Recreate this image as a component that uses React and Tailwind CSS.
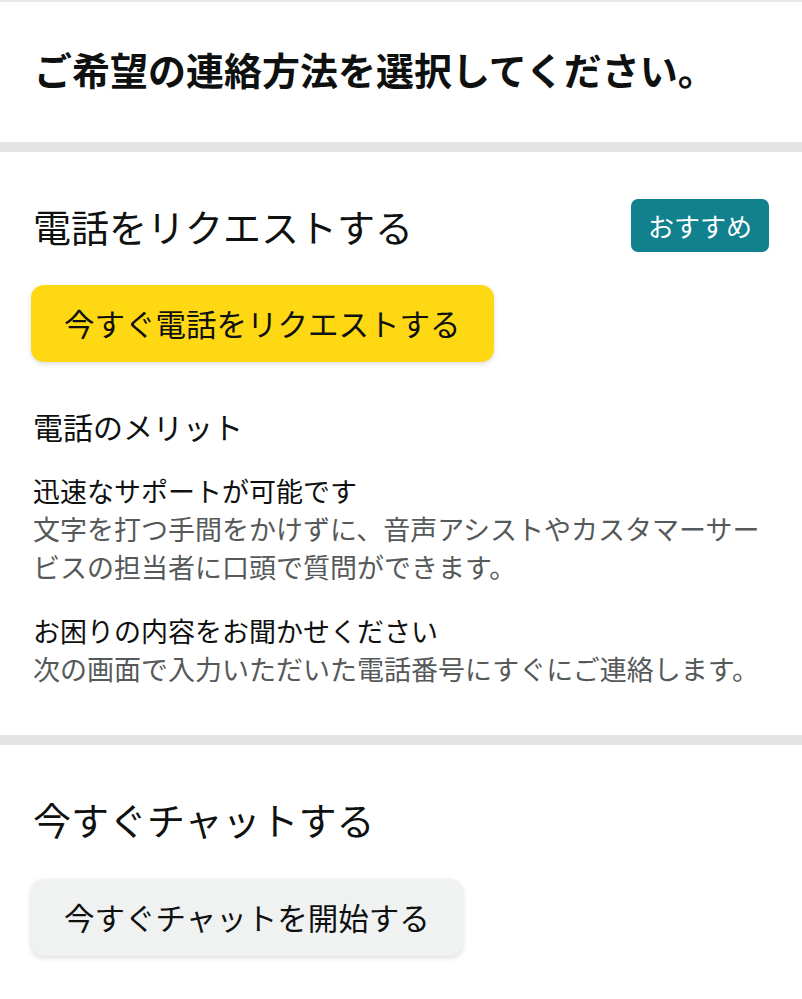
import React from 'react';

const FONT = { fontFamily: '"Noto Sans CJK JP", "Noto Sans", sans-serif' };

const MERITS = [
  {
    title: '迅速なサポートが可能です',
    body: '文字を打つ手間をかけずに、音声アシストやカスタマーサービスの担当者に口頭で質問ができます。',
  },
  {
    title: 'お困りの内容をお聞かせください',
    body: '次の画面で入力いただいた電話番号にすぐにご連絡します。',
  },
];

function Divider({ thick = false }) {
  return <div className={thick ? 'h-[10px] bg-[#e4e4e4]' : 'h-[2px] bg-[#e8e8e8]'} />;
}

export default function App() {
  return (
    <div className="min-h-screen bg-white text-[#0f1111]" style={FONT}>
      <Divider />

      {/* Page heading */}
      <div className="flex h-[140px] items-center px-[34px] pb-[6px]">
        <h1 className="text-[38px] font-bold leading-[1.2]">ご希望の連絡方法を選択してください。</h1>
      </div>

      <Divider thick />

      {/* Phone request */}
      <section className="px-[33px] pt-[47px] pb-[47px]">
        <div className="flex items-center justify-between">
          <h2 className="text-[38px] font-normal leading-[1.2]">電話をリクエストする</h2>
          <span className="flex h-[53px] items-center rounded-[7px] bg-[#12818e] px-[17px] text-[26px] leading-none text-white">
            おすすめ
          </span>
        </div>

        <button className="-ml-[2px] mt-[33px] flex h-[77px] items-center rounded-[13px] bg-[#ffd814] px-[33px] text-[30.5px] leading-none text-[#0f1111] shadow-[0_2px_5px_rgba(15,17,17,0.15)]">
          今すぐ電話をリクエストする
        </button>

        <h3 className="mt-[43px] text-[30px] font-normal leading-[42px]">電話のメリット</h3>

        <div className="mt-[25px] flex flex-col gap-[26px]">
          {MERITS.map((m) => (
            <div key={m.title} className="text-[27px] leading-[38px]">
              <p className="text-[#0f1111]">{m.title}</p>
              <p className="text-[#565959]">{m.body}</p>
            </div>
          ))}
        </div>
      </section>

      <Divider thick />

      {/* Chat */}
      <section className="px-[33px] pt-[51px] pb-[40px]">
        <h2 className="text-[38px] font-normal leading-[1.2]">今すぐチャットする</h2>
        <button className="-ml-[2px] mt-[37px] flex h-[77px] items-center rounded-[13px] bg-[#f0f2f2] px-[33px] text-[30.5px] leading-none text-[#0f1111] shadow-[0_2px_5px_rgba(15,17,17,0.15)]">
          今すぐチャットを開始する
        </button>
      </section>
    </div>
  );
}
